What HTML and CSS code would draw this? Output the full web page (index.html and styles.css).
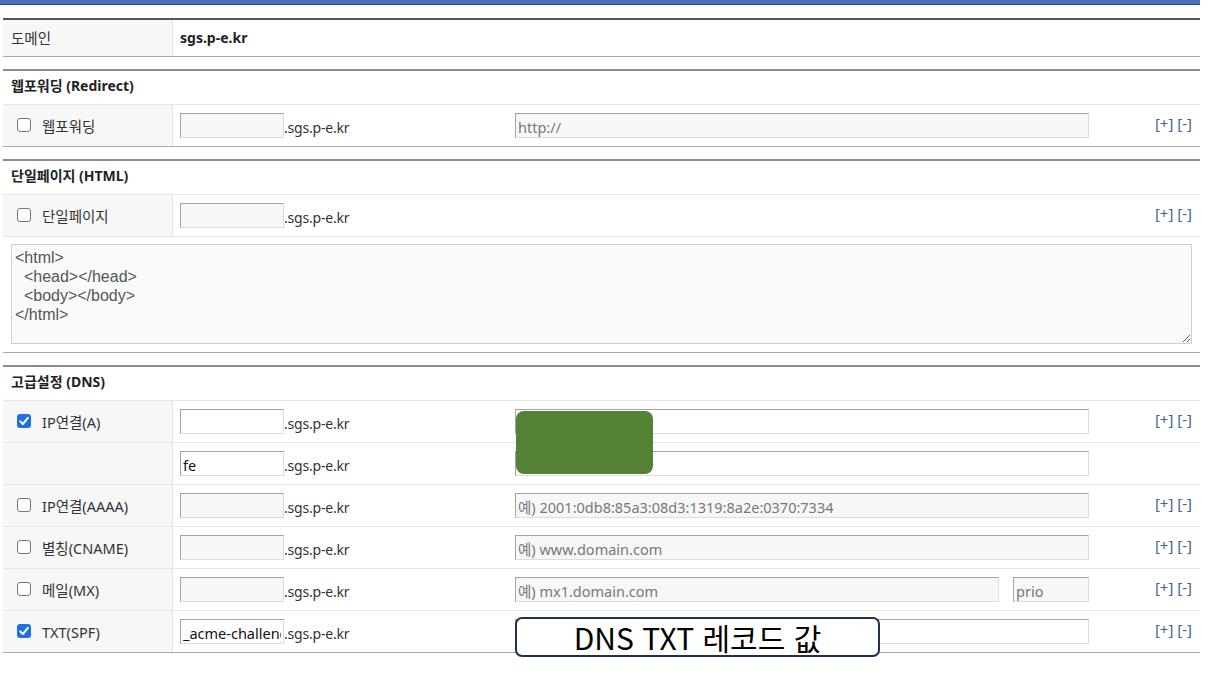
FILE: index.html
```html
<!DOCTYPE html>
<html lang="ko">
<head>
    <meta charset="UTF-8">
    <title>도메인 설정</title>
    <link rel="stylesheet" href="styles.css">
</head>
<body>
    <div class="topbar"></div>
    <div class="wrap">
        <!-- 도메인 -->
        <div class="sect first">
            <div class="row domain">
                <div class="lbl plain">도메인</div>
                <div class="val">sgs.p-e.kr</div>
            </div>
        </div>

        <!-- 웹포워딩 -->
        <div class="sect">
            <div class="sect-title">웹포워딩 (Redirect)</div>
            <div class="row">
                <div class="lbl"><span class="chk"></span>웹포워딩</div>
                <div class="sub"><input class="box host" type="text"><span class="zone">.sgs.p-e.kr</span></div>
                <div class="tgt"><input class="box wide" type="text" placeholder="http://"></div>
                <div class="ctl">[+] [-]</div>
            </div>
        </div>

        <!-- 단일페이지 -->
        <div class="sect">
            <div class="sect-title">단일페이지 (HTML)</div>
            <div class="row">
                <div class="lbl"><span class="chk"></span>단일페이지</div>
                <div class="sub"><input class="box host" type="text"><span class="zone">.sgs.p-e.kr</span></div>
                <div class="tgt"></div>
                <div class="ctl">[+] [-]</div>
            </div>
            <div class="row code-row">
                <textarea class="code"><html>
  <head></head>
  <body></body>
</html></textarea>
            </div>
        </div>

        <!-- 고급설정 -->
        <div class="sect">
            <div class="sect-title">고급설정 (DNS)</div>
            <div class="row">
                <div class="lbl"><span class="chk on"><svg viewBox="0 0 14 14" width="14" height="14"><path d="M3.2 7.4 L5.9 10 L10.9 3.8" fill="none" stroke="#fff" stroke-width="2" stroke-linecap="round" stroke-linejoin="round"/></svg></span>IP연결(A)</div>
                <div class="sub"><input class="box host on" type="text"><span class="zone">.sgs.p-e.kr</span></div>
                <div class="tgt"><input class="box wide on" type="text"></div>
                <div class="ctl">[+] [-]</div>
            </div>
            <div class="row">
                <div class="lbl"></div>
                <div class="sub"><input class="box host on" type="text" value="fe"><span class="zone">.sgs.p-e.kr</span></div>
                <div class="tgt"><input class="box wide on" type="text"></div>
                <div class="ctl"></div>
            </div>
            <div class="row">
                <div class="lbl"><span class="chk"></span>IP연결(AAAA)</div>
                <div class="sub"><input class="box host" type="text"><span class="zone">.sgs.p-e.kr</span></div>
                <div class="tgt"><input class="box wide" type="text" placeholder="예) 2001:0db8:85a3:08d3:1319:8a2e:0370:7334"></div>
                <div class="ctl">[+] [-]</div>
            </div>
            <div class="row">
                <div class="lbl"><span class="chk"></span>별칭(CNAME)</div>
                <div class="sub"><input class="box host" type="text"><span class="zone">.sgs.p-e.kr</span></div>
                <div class="tgt"><input class="box wide" type="text" placeholder="예) www.domain.com"></div>
                <div class="ctl">[+] [-]</div>
            </div>
            <div class="row">
                <div class="lbl"><span class="chk"></span>메일(MX)</div>
                <div class="sub"><input class="box host" type="text"><span class="zone">.sgs.p-e.kr</span></div>
                <div class="tgt"><input class="box mx" type="text" placeholder="예) mx1.domain.com"><input class="box prio" type="text" placeholder="prio"></div>
                <div class="ctl">[+] [-]</div>
            </div>
            <div class="row">
                <div class="lbl"><span class="chk on"><svg viewBox="0 0 14 14" width="14" height="14"><path d="M3.2 7.4 L5.9 10 L10.9 3.8" fill="none" stroke="#fff" stroke-width="2" stroke-linecap="round" stroke-linejoin="round"/></svg></span>TXT(SPF)</div>
                <div class="sub"><input class="box host on" type="text" value="_acme-challenge"><span class="zone">.sgs.p-e.kr</span></div>
                <div class="tgt"><input class="box wide on" type="text"></div>
                <div class="ctl">[+] [-]</div>
            </div>
        </div>

        <!-- 가림 박스 / 설명 -->
        <div class="mask"></div>
        <div class="note">DNS TXT 레코드 값</div>
    </div>
</body>
</html>
```

FILE: styles.css
```css
body {
    margin: 0;
    font-family: "Noto Sans", "Noto Sans CJK KR", sans-serif;
    font-size: 14px;
    color: #333;
    background: #fff;
}
.topbar {
    width: 1200px;
    height: 4px;
    background-color: #4a6fb6;
    border-bottom: 1px solid #23439a;
}
.wrap {
    position: relative;
    width: 1197px;
    margin-left: 3px;
    padding-top: 13px;
}
.sect {
    border-top: 2px solid #8c8c8c;
    border-bottom: 1px solid #aaa;
    margin-bottom: 12px;
}
.sect.first {
    border-top-color: #555;
}
.sect-title {
    height: 33px;
    line-height: 30px;
    padding-left: 8px;
    font-weight: bold;
    color: #222;
}
.row {
    display: flex;
    height: 41px;
    border-top: 1px solid #e6e6e6;
}
.sect.first .row {
    border-top: none;
    height: 36px;
}
.lbl {
    width: 155px;
    padding-left: 14px;
    background-color: #f7f7f7;
    border-right: 1px solid #e3e3e3;
    display: flex;
    align-items: center;
    font-size: 14.5px;
    color: #333;
}
.lbl.plain {
    padding-left: 8px;
    width: 161px;
    padding-bottom: 1px;
}
.val {
    padding-left: 7px;
    display: flex;
    align-items: center;
    padding-bottom: 1px;
    font-weight: bold;
    color: #222;
}
.chk {
    width: 12px;
    height: 12px;
    border: 1px solid #767676;
    border-radius: 3px;
    background: #fff;
    margin-right: 11px;
    margin-top: -1px;
    display: inline-flex;
}
.chk.on {
    width: 14px;
    height: 14px;
    border: none;
    background-color: #1f6fe5;
}
.sub {
    width: 327px;
    padding-left: 7px;
    display: flex;
    align-items: center;
}
.zone {
    padding-top: 3px;
    letter-spacing: -0.2px;
    color: #333;
}
.tgt {
    width: 582px;
    padding-left: 8px;
    display: flex;
    align-items: center;
    gap: 14px;
}
.ctl {
    flex: 1;
    text-align: right;
    padding-right: 8px;
    padding-top: 8px;
    font-size: 15px;
    color: #3f6690;
}
.box {
    box-sizing: border-box;
    height: 25px;
    margin: 0;
    padding: 2px 2px 0;
    font-family: "Noto Sans", "Noto Sans CJK KR", sans-serif;
    font-size: 14.5px;
    color: #111;
    background-color: #f7f7f7;
    border: 1px solid;
    border-color: #a3a3a3 #dcdcdc #dcdcdc #a3a3a3;
    outline: none;
}
.box::placeholder {
    color: #777;
}
.box.on {
    background-color: #fff;
}
.host {
    width: 104px;
}
.wide {
    width: 574px;
}
.mx {
    width: 484px;
}
.prio {
    width: 76px;
}
.code-row {
    height: auto;
    padding: 7px 8px 8px 8px;
}
.code {
    box-sizing: border-box;
    width: 1181px;
    height: 100px;
    margin: 0;
    padding: 3px 3px;
    font-family: "Liberation Sans", "Noto Sans CJK KR", sans-serif;
    font-size: 16px;
    line-height: 19px;
    color: #555;
    background-color: #fafafa;
    border: 1px solid #d0d0d0;
}
.mask {
    position: absolute;
    left: 513px;
    top: 406px;
    width: 137px;
    height: 63px;
    border-radius: 8px;
    background-color: #538135;
}
.note {
    position: absolute;
    left: 512px;
    top: 612px;
    width: 361px;
    height: 36px;
    border: 2px solid #1f2f4e;
    border-radius: 7px;
    background: #fff;
    font-family: "Noto Sans CJK KR", sans-serif;
    font-size: 30px;
    line-height: 36px;
    text-align: center;
    color: #000;
}
```
